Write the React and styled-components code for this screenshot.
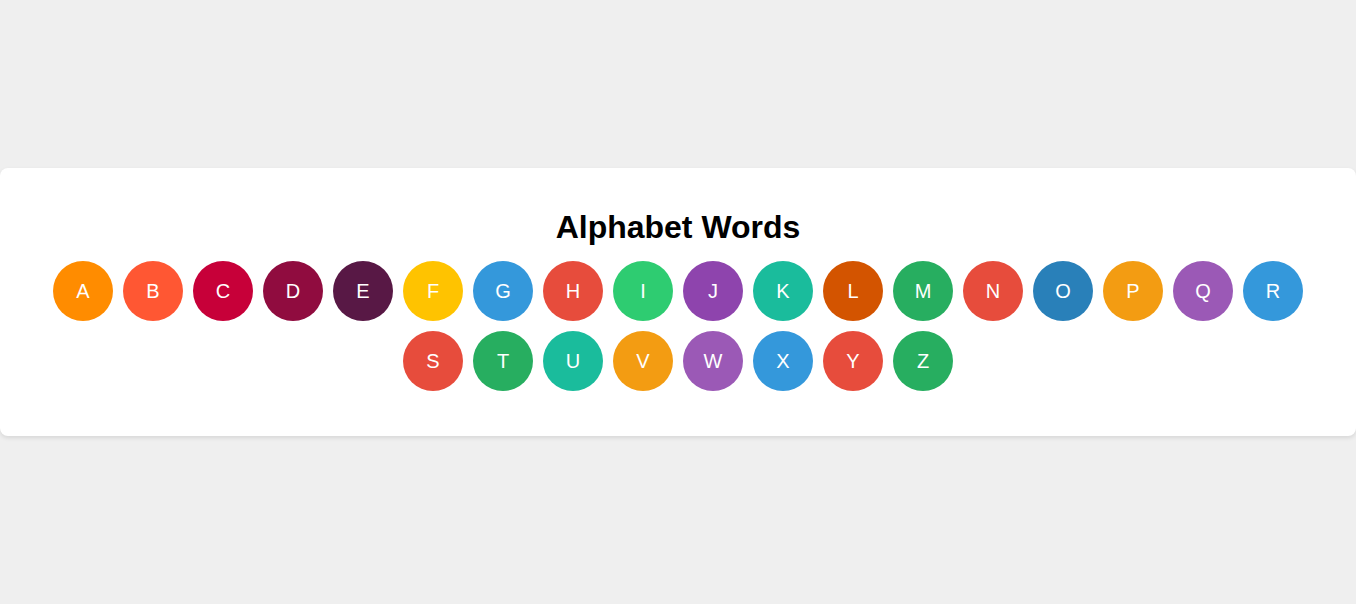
import React from "react";
import styled, { createGlobalStyle } from "styled-components";

const letters = [
  ["A", "#ff8c00"],
  ["B", "#ff5733"],
  ["C", "#c70039"],
  ["D", "#900c3f"],
  ["E", "#581845"],
  ["F", "#ffc300"],
  ["G", "#3498db"],
  ["H", "#e74c3c"],
  ["I", "#2ecc71"],
  ["J", "#8e44ad"],
  ["K", "#1abc9c"],
  ["L", "#d35400"],
  ["M", "#27ae60"],
  ["N", "#e74c3c"],
  ["O", "#2980b9"],
  ["P", "#f39c12"],
  ["Q", "#9b59b6"],
  ["R", "#3498db"],
  ["S", "#e74c3c"],
  ["T", "#27ae60"],
  ["U", "#1abc9c"],
  ["V", "#f39c12"],
  ["W", "#9b59b6"],
  ["X", "#3498db"],
  ["Y", "#e74c3c"],
  ["Z", "#27ae60"],
];

const GlobalStyle = createGlobalStyle`
  body {
    margin: 0;
    background: #efefef;
    font-family: "Liberation Sans", Arial, sans-serif;
  }
`;

export default function App() {
  return (
    <>
      <GlobalStyle />
      <Page>
        <Card>
          <Title>Alphabet Words</Title>
          <Letters>
            {letters.map(([l, c]) => (
              <Circle key={l} $color={c}>
                {l}
              </Circle>
            ))}
          </Letters>
        </Card>
      </Page>
    </>
  );
}

const Page = styled.div`
  height: 100vh;
  display: flex;
  align-items: center;
  justify-content: center;
`;

const Card = styled.div`
  width: 100%;
  box-sizing: border-box;
  background: #fff;
  border-radius: 8px;
  box-shadow: 0 2px 4px rgba(0, 0, 0, 0.1);
  padding: 20px;
  text-align: center;
`;

const Title = styled.h1`
  font-size: 32px;
  font-weight: bold;
  color: #000;
  margin: 21px 0 10px;
`;

const Letters = styled.div`
  display: flex;
  flex-wrap: wrap;
  justify-content: center;
  margin-bottom: 20px;
`;

const Circle = styled.div`
  width: 60px;
  height: 60px;
  margin: 5px;
  border-radius: 50%;
  background: ${(p) => p.$color};
  color: #fff;
  font-size: 20px;
  display: flex;
  align-items: center;
  justify-content: center;
`;
